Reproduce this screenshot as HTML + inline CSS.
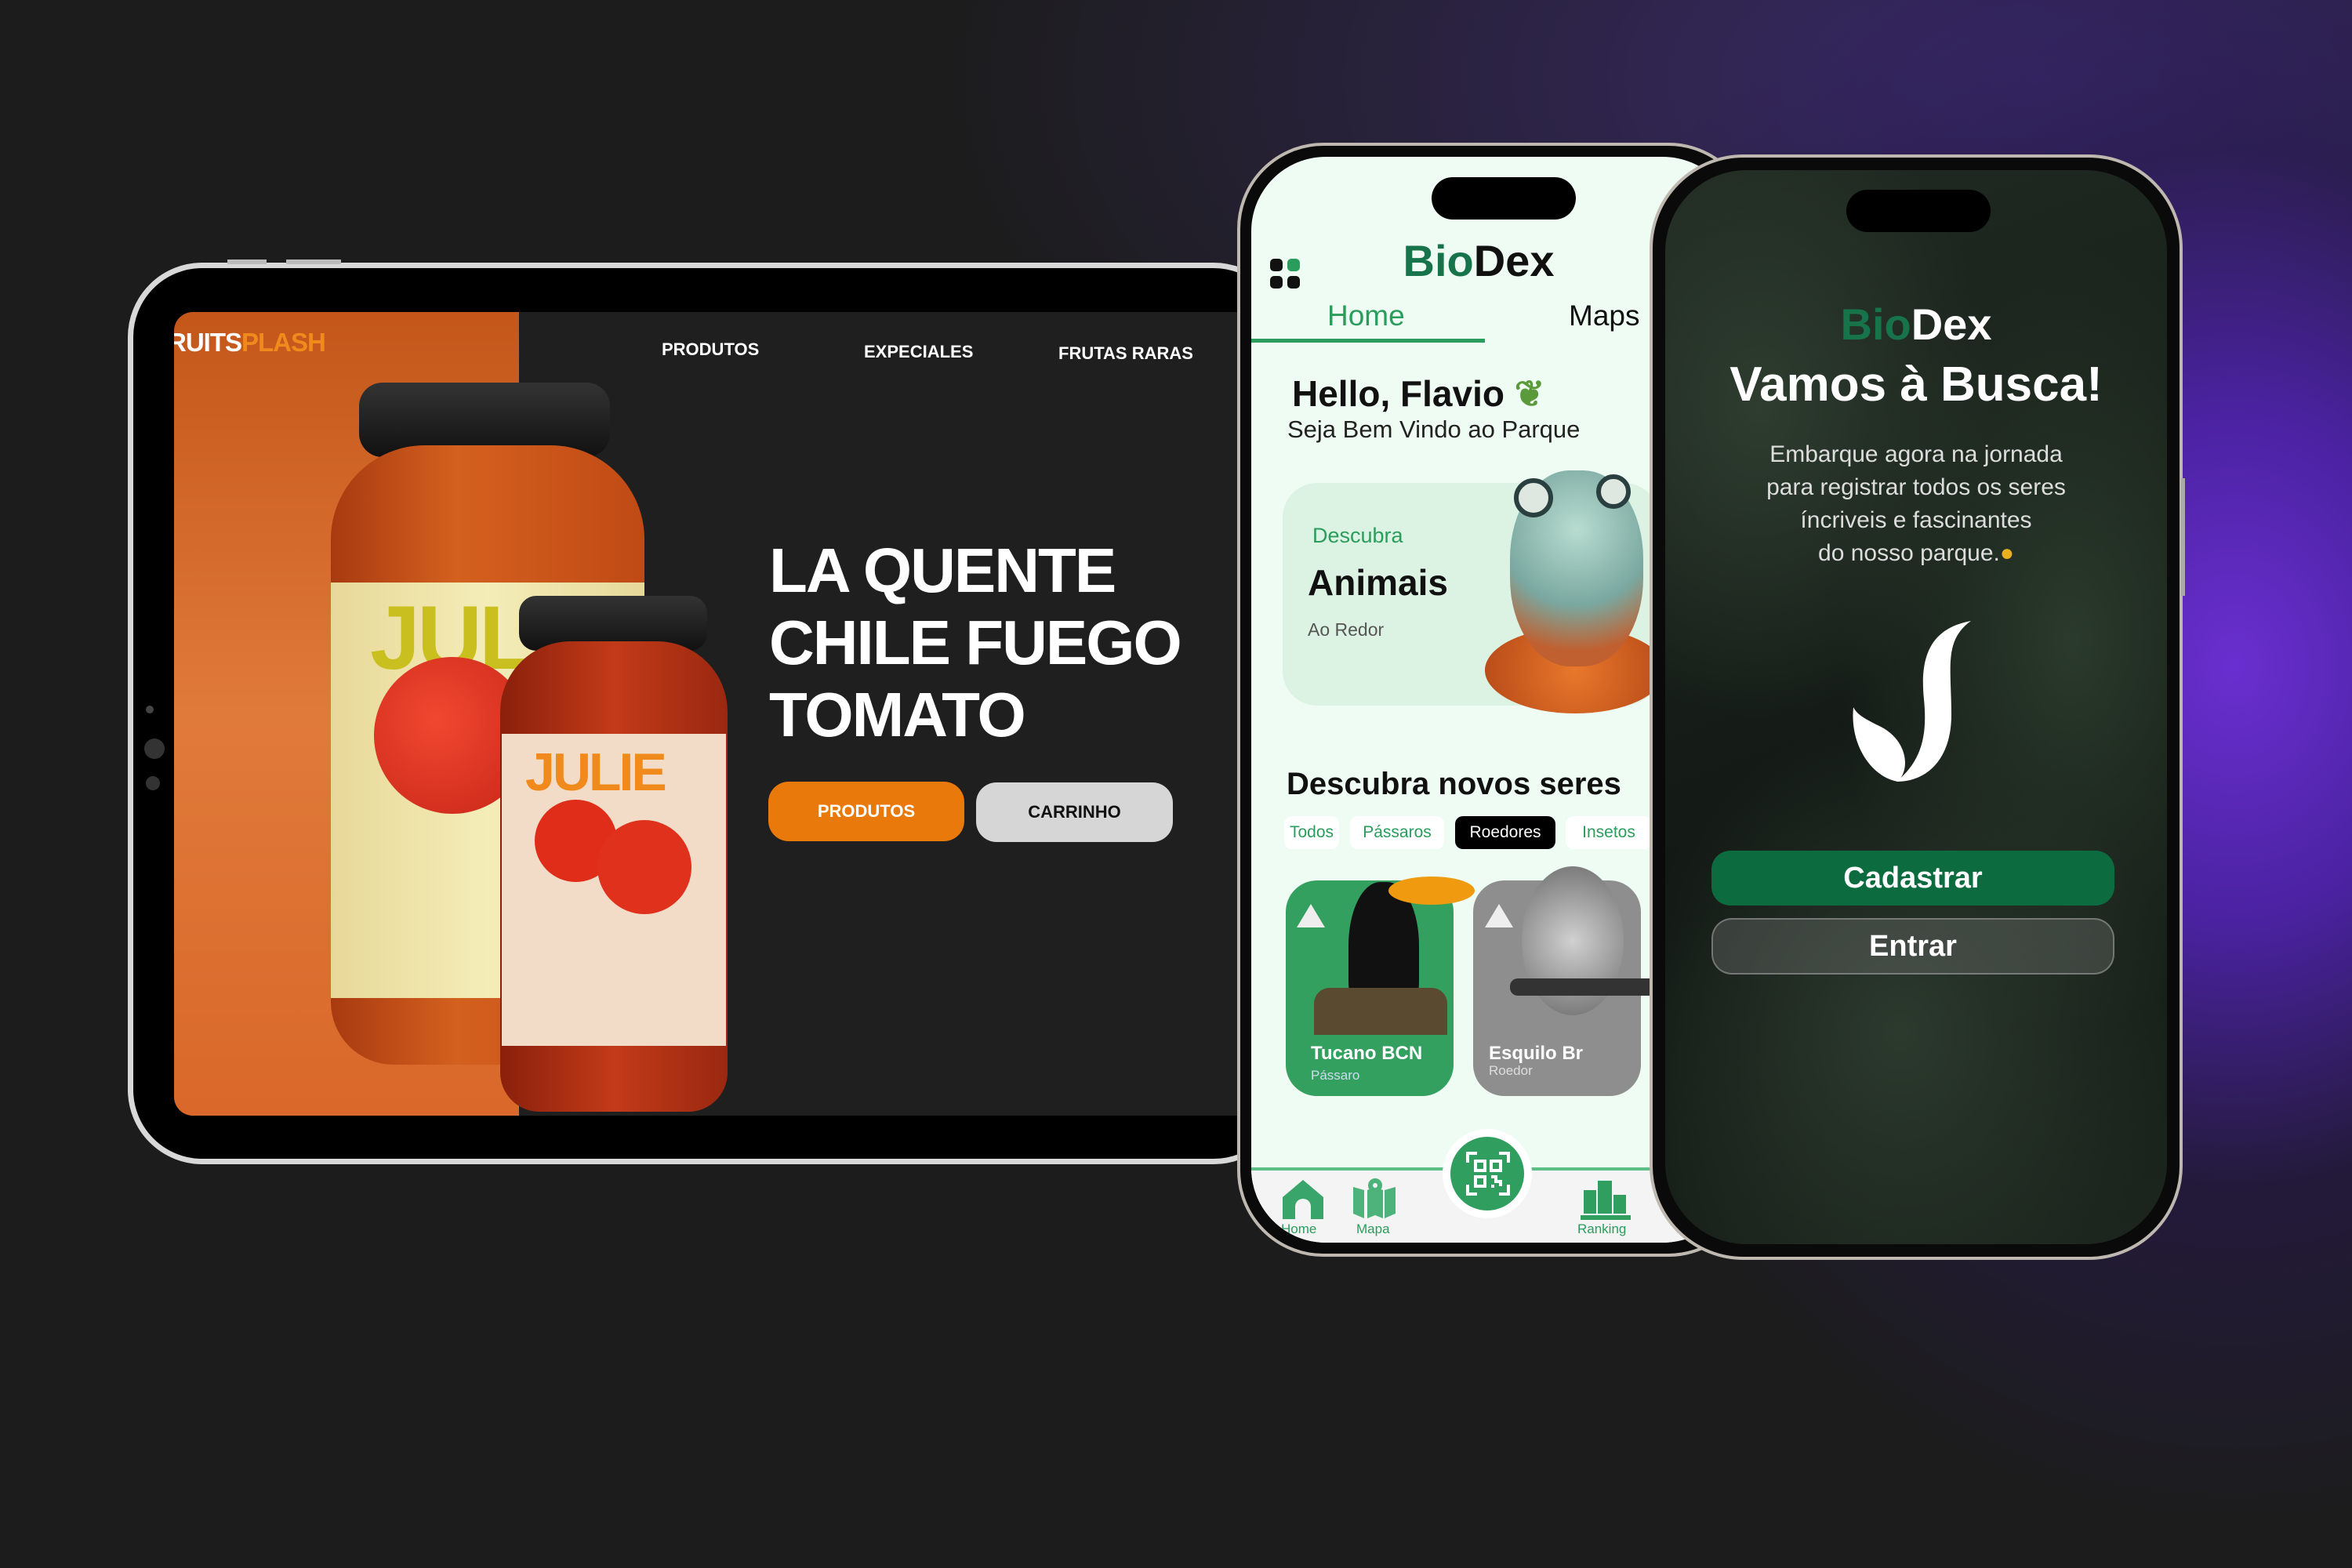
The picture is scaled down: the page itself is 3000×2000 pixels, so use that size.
<!DOCTYPE html>
<html><head><meta charset="utf-8"><style>
*{margin:0;padding:0;box-sizing:border-box}
body{width:3000px;height:2000px;overflow:hidden;position:relative;font-family:"Liberation Sans",sans-serif;
background:radial-gradient(ellipse 900px 1100px at 2850px 850px,#6a2fd0 0%,#4a22a0 30%,rgba(40,25,80,.6) 60%,rgba(28,28,28,0) 100%),radial-gradient(ellipse 1400px 700px at 2600px 100px,#3a2a6a 0%,rgba(28,28,28,0) 100%),#1c1c1c}
.a{position:absolute}
.w{color:#fff}
</style></head><body>

<!-- Tablet -->
<div class="a" style="left:163px;top:335px;width:1480px;height:1150px;border-radius:95px;background:#000;border:7px solid #d8d8d8;"></div>
<div class="a" style="left:290px;top:331px;width:50px;height:6px;background:#bbb"></div>
<div class="a" style="left:365px;top:331px;width:70px;height:6px;background:#bbb"></div>
<div class="a" style="left:186px;top:900px;width:10px;height:10px;border-radius:50%;background:#444"></div>
<div class="a" style="left:184px;top:942px;width:26px;height:26px;border-radius:50%;background:#333"></div>
<div class="a" style="left:186px;top:990px;width:18px;height:18px;border-radius:50%;background:#333"></div>
<div class="a" style="left:222px;top:398px;width:1400px;height:1025px;background:#1f1f1f;border-radius:24px 0 0 24px;overflow:hidden">
  <div class="a" style="left:0;top:0;width:440px;height:1025px;background:linear-gradient(180deg,#c4561a,#e07a3a 50%,#d9682a)"></div>
  <div class="a w" style="left:-8px;top:20px;font-size:33px;font-weight:bold;letter-spacing:-1px">RUITS<span style="color:#f08a1c">PLASH</span></div>
  <div class="a w" style="left:622px;top:35px;font-size:22px;font-weight:bold">PRODUTOS</div>
  <div class="a w" style="left:880px;top:38px;font-size:22px;font-weight:bold">EXPECIALES</div>
  <div class="a w" style="left:1128px;top:40px;font-size:22px;font-weight:bold">FRUTAS RARAS</div>
  <!-- big jar -->
  <div class="a" style="left:236px;top:90px;width:320px;height:95px;border-radius:30px;background:linear-gradient(#333,#111)"></div>
  <div class="a" style="left:200px;top:170px;width:400px;height:790px;border-radius:120px 120px 80px 80px;background:linear-gradient(90deg,#a83a10,#d4601f 40%,#c04a14)"></div>
  <div class="a" style="left:200px;top:345px;width:400px;height:530px;background:linear-gradient(90deg,#e8d898,#f4edb8 50%,#e6d89a)"></div>
  <div class="a" style="left:250px;top:350px;font-size:115px;font-weight:bold;color:#c9c020;letter-spacing:-4px">JULIE</div>
  <div class="a" style="left:255px;top:440px;width:200px;height:200px;border-radius:50%;background:radial-gradient(circle at 40% 40%,#f04830,#c82518)"></div>
  <!-- small jar -->
  <div class="a" style="left:440px;top:362px;width:240px;height:70px;border-radius:22px;background:linear-gradient(#333,#111)"></div>
  <div class="a" style="left:416px;top:420px;width:290px;height:600px;border-radius:90px 90px 50px 50px;background:linear-gradient(90deg,#8a200c,#c23a18 50%,#9a2810)"></div>
  <div class="a" style="left:418px;top:538px;width:286px;height:398px;background:#f2dcc8"></div>
  <div class="a" style="left:448px;top:548px;font-size:68px;font-weight:bold;color:#f08a1c;letter-spacing:-3px">JULIE</div>
  <div class="a" style="left:460px;top:622px;width:105px;height:105px;border-radius:50%;background:#e02d1a"></div>
  <div class="a" style="left:540px;top:648px;width:120px;height:120px;border-radius:50%;background:#e0311c"></div>
  <div class="a w" style="left:759px;top:284px;font-size:80px;font-weight:bold;line-height:92px;letter-spacing:-2px">LA QUENTE<br>CHILE FUEGO<br>TOMATO</div>
  <div class="a w" style="left:758px;top:599px;width:250px;height:76px;border-radius:26px;background:#e8790a;font-size:22px;font-weight:bold;text-align:center;line-height:76px">PRODUTOS</div>
  <div class="a" style="left:1023px;top:600px;width:251px;height:76px;border-radius:26px;background:#d6d6d6;color:#111;font-size:22px;font-weight:bold;text-align:center;line-height:76px">CARRINHO</div>
</div>

<!-- Phone 1 -->
<div class="a" style="left:1578px;top:182px;width:660px;height:1421px;border-radius:110px;background:#0a0a0a;border:4px solid #bfb8b0"></div>
<div class="a" style="left:1596px;top:200px;width:620px;height:1385px;border-radius:95px;background:#effcf3;overflow:hidden">
  <div class="a" style="left:230px;top:26px;width:184px;height:54px;border-radius:27px;background:#000"></div>
  <div class="a" style="left:0;top:100px;width:580px;text-align:center;font-size:56px;font-weight:bold;color:#111;padding-left:0"><span style="color:#17734a">Bio</span>Dex</div>
  <div class="a" style="left:24px;top:130px;width:40px;height:40px">
    <div class="a" style="left:0;top:0;width:16px;height:16px;border-radius:5px;background:#111"></div>
    <div class="a" style="left:22px;top:0;width:16px;height:16px;border-radius:5px;background:#2a9d5c"></div>
    <div class="a" style="left:0;top:22px;width:16px;height:16px;border-radius:5px;background:#111"></div>
    <div class="a" style="left:22px;top:22px;width:16px;height:16px;border-radius:5px;background:#111"></div>
  </div>
  <div class="a" style="left:97px;top:182px;font-size:37px;color:#2a9d5c">Home</div>
  <div class="a" style="left:405px;top:182px;font-size:37px;color:#111">Maps</div>
  <div class="a" style="left:0;top:232px;width:298px;height:5px;background:#2a9d5c"></div>
  <div class="a" style="left:52px;top:275px;font-size:46px;font-weight:bold;color:#111">Hello, Flavio <span style="color:#5a9a3a">❦</span></div>
  <div class="a" style="left:46px;top:330px;font-size:31px;color:#222">Seja Bem Vindo ao Parque</div>
  <div class="a" style="left:40px;top:416px;width:480px;height:284px;border-radius:44px;background:#dcf3e4"></div>
  <div class="a" style="left:78px;top:468px;font-size:27px;color:#2a9d5c">Descubra</div>
  <div class="a" style="left:72px;top:516px;font-size:46px;font-weight:bold;color:#111">Animais</div>
  <div class="a" style="left:72px;top:590px;font-size:23px;color:#555">Ao Redor</div>
  <!-- frog -->
  <div class="a" style="left:298px;top:600px;width:230px;height:110px;border-radius:50%;background:radial-gradient(circle,#e8782a,#b54818)"></div>
  <div class="a" style="left:330px;top:400px;width:170px;height:250px;border-radius:45%;background:radial-gradient(circle at 50% 30%,#b8dcd0,#7aa8a0 50%,#c06030 80%)"></div>
  <div class="a" style="left:335px;top:410px;width:50px;height:50px;border-radius:50%;background:#dfe8e0;border:6px solid #2a4040"></div>
  <div class="a" style="left:440px;top:405px;width:44px;height:44px;border-radius:50%;background:#dfe8e0;border:6px solid #2a4040"></div>
  <div class="a" style="left:45px;top:778px;font-size:40px;font-weight:bold;color:#111">Descubra novos seres</div>
  <div class="a" style="left:42px;top:841px;width:70px;height:42px;border-radius:10px;background:#fff;color:#2a9d5c;font-size:21px;text-align:center;line-height:42px">Todos</div>
  <div class="a" style="left:126px;top:841px;width:120px;height:42px;border-radius:10px;background:#fff;color:#2a9d5c;font-size:21px;text-align:center;line-height:42px">Pássaros</div>
  <div class="a w" style="left:260px;top:841px;width:128px;height:42px;border-radius:10px;background:#000;font-size:21px;text-align:center;line-height:42px">Roedores</div>
  <div class="a" style="left:401px;top:841px;width:110px;height:42px;border-radius:10px;background:#fff;color:#2a9d5c;font-size:21px;text-align:center;line-height:42px">Insetos</div>
  <div class="a" style="left:44px;top:923px;width:214px;height:275px;border-radius:40px;background:#33a060"></div>
  <div class="a" style="left:124px;top:925px;width:90px;height:180px;border-radius:45% 45% 30% 30%;background:#111"></div>
  <div class="a" style="left:175px;top:918px;width:110px;height:36px;border-radius:50%;background:#f09a10"></div>
  <div class="a" style="left:80px;top:1060px;width:170px;height:60px;background:#5a4a30;border-radius:20px 20px 0 0"></div>
  <div class="a" style="left:58px;top:953px;width:0;height:0;border-left:18px solid transparent;border-right:18px solid transparent;border-bottom:30px solid #eee"></div>
  <div class="a w" style="left:76px;top:1130px;font-size:24px;font-weight:bold">Tucano BCN</div>
  <div class="a" style="left:76px;top:1162px;font-size:17px;color:#cde">Pássaro</div>
  <div class="a" style="left:283px;top:923px;width:214px;height:275px;border-radius:40px;background:#8e8e8e"></div>
  <div class="a" style="left:345px;top:905px;width:130px;height:190px;border-radius:50%;background:radial-gradient(circle,#d0d0d0,#6a6a6a)"></div>
  <div class="a" style="left:330px;top:1048px;width:200px;height:22px;background:#333;border-radius:10px"></div>
  <div class="a" style="left:298px;top:953px;width:0;height:0;border-left:18px solid transparent;border-right:18px solid transparent;border-bottom:30px solid #eee"></div>
  <div class="a w" style="left:303px;top:1130px;font-size:24px;font-weight:bold">Esquilo Br</div>
  <div class="a" style="left:303px;top:1156px;font-size:17px;color:#ddd">Roedor</div>
  <!-- nav -->
  <div class="a" style="left:0;top:1289px;width:620px;height:100px;background:#f4f4f4;border-top:4px solid #5cbf85"></div>
  <div class="a" style="left:244px;top:1240px;width:114px;height:114px;border-radius:50%;background:#fff"></div>
  <div class="a" style="left:254px;top:1250px;width:94px;height:94px;border-radius:50%;background:#2f9e5e"></div>
  <svg class="a" style="left:274px;top:1269px" width="56" height="56" viewBox="0 0 56 56" fill="none" stroke="#fff" stroke-width="4"><path d="M2 14V2h12M42 2h12v12M2 42v12h12M54 42v12H42"/><rect x="12" y="12" width="12" height="12"/><rect x="32" y="12" width="12" height="12"/><rect x="12" y="32" width="12" height="12"/><path d="M32 32h6v6h6v6M32 44h4"/></svg>
  <svg class="a" style="left:40px;top:1305px" width="52" height="52" viewBox="0 0 52 52"><path d="M0 22L26 0 52 22V50H36V34a10 10 0 0 0-20 0V50H0Z" fill="#3aa56a"/></svg>
  <div class="a" style="left:38px;top:1358px;font-size:17px;color:#2a9d5c">Home</div>
  <svg class="a" style="left:130px;top:1302px" width="54" height="52" viewBox="0 0 54 52"><path d="M0 12L14 16V52L0 46ZM18 16L28 12 38 16V52L28 48 18 52ZM40 16L54 12V46L40 52Z" fill="#4db37a"/><circle cx="28" cy="10" r="9" fill="#4db37a"/><circle cx="28" cy="10" r="3" fill="#f4f4f4"/></svg>
  <div class="a" style="left:134px;top:1358px;font-size:17px;color:#2a9d5c">Mapa</div>
  <svg class="a" style="left:420px;top:1300px" width="64" height="56" viewBox="0 0 64 56" fill="#2f9e5e"><rect x="4" y="18" width="16" height="30"/><rect x="22" y="6" width="18" height="42"/><rect x="42" y="24" width="16" height="24"/><rect x="0" y="50" width="64" height="6"/></svg>
  <div class="a" style="left:416px;top:1358px;font-size:17px;color:#2a9d5c">Ranking</div>
</div>

<!-- Phone 2 -->
<div class="a" style="left:2104px;top:197px;width:680px;height:1410px;border-radius:120px;background:#0a0a0a;border:4px solid #bfb8b0"></div>
<div class="a" style="left:2124px;top:217px;width:640px;height:1370px;border-radius:104px;overflow:hidden;background:radial-gradient(ellipse 300px 400px at 120px 300px,#2e3d30,rgba(0,0,0,0)),radial-gradient(ellipse 300px 500px at 520px 600px,#2a3a2c,rgba(0,0,0,0)),radial-gradient(ellipse 350px 400px at 300px 1100px,#2c3a2e,rgba(0,0,0,0)),linear-gradient(160deg,#202a22,#121814 60%,#1c261e)">
  <div class="a" style="left:231px;top:25px;width:184px;height:54px;border-radius:27px;background:#000"></div>
  <div class="a w" style="left:0;top:164px;width:640px;text-align:center;font-size:56px;font-weight:bold"><span style="color:#17734a">Bio</span>Dex</div>
  <div class="a w" style="left:0;top:238px;width:640px;text-align:center;font-size:62px;font-weight:bold">Vamos à Busca!</div>
  <div class="a" style="left:0;top:342px;width:640px;text-align:center;font-size:30px;color:#ddd;line-height:42px">Embarque agora na jornada<br>para registrar todos os seres<br>íncriveis e fascinantes<br>do nosso parque.<span style="color:#e8b020">●</span></div>
  <svg class="a" style="left:235px;top:575px" width="160" height="215" viewBox="0 0 160 215"><path d="M155 0C100 10 90 50 95 100 100 150 90 180 60 205 100 205 130 175 130 120 130 60 120 25 155 0Z" fill="#fff"/><path d="M5 110C0 160 30 200 62 205 80 185 70 150 40 135 20 125 10 120 5 110Z" fill="#fff"/></svg>
  <div class="a w" style="left:59px;top:868px;width:514px;height:70px;border-radius:24px;background:#0d6b40;font-size:38px;font-weight:bold;text-align:center;line-height:70px">Cadastrar</div>
  <div class="a w" style="left:59px;top:954px;width:514px;height:72px;border-radius:26px;background:rgba(120,120,120,.35);border:2px solid rgba(200,200,200,.4);font-size:38px;font-weight:bold;text-align:center;line-height:68px">Entrar</div>
</div>
<div class="a" style="left:2782px;top:610px;width:5px;height:150px;background:#aaa"></div>
</body></html>
